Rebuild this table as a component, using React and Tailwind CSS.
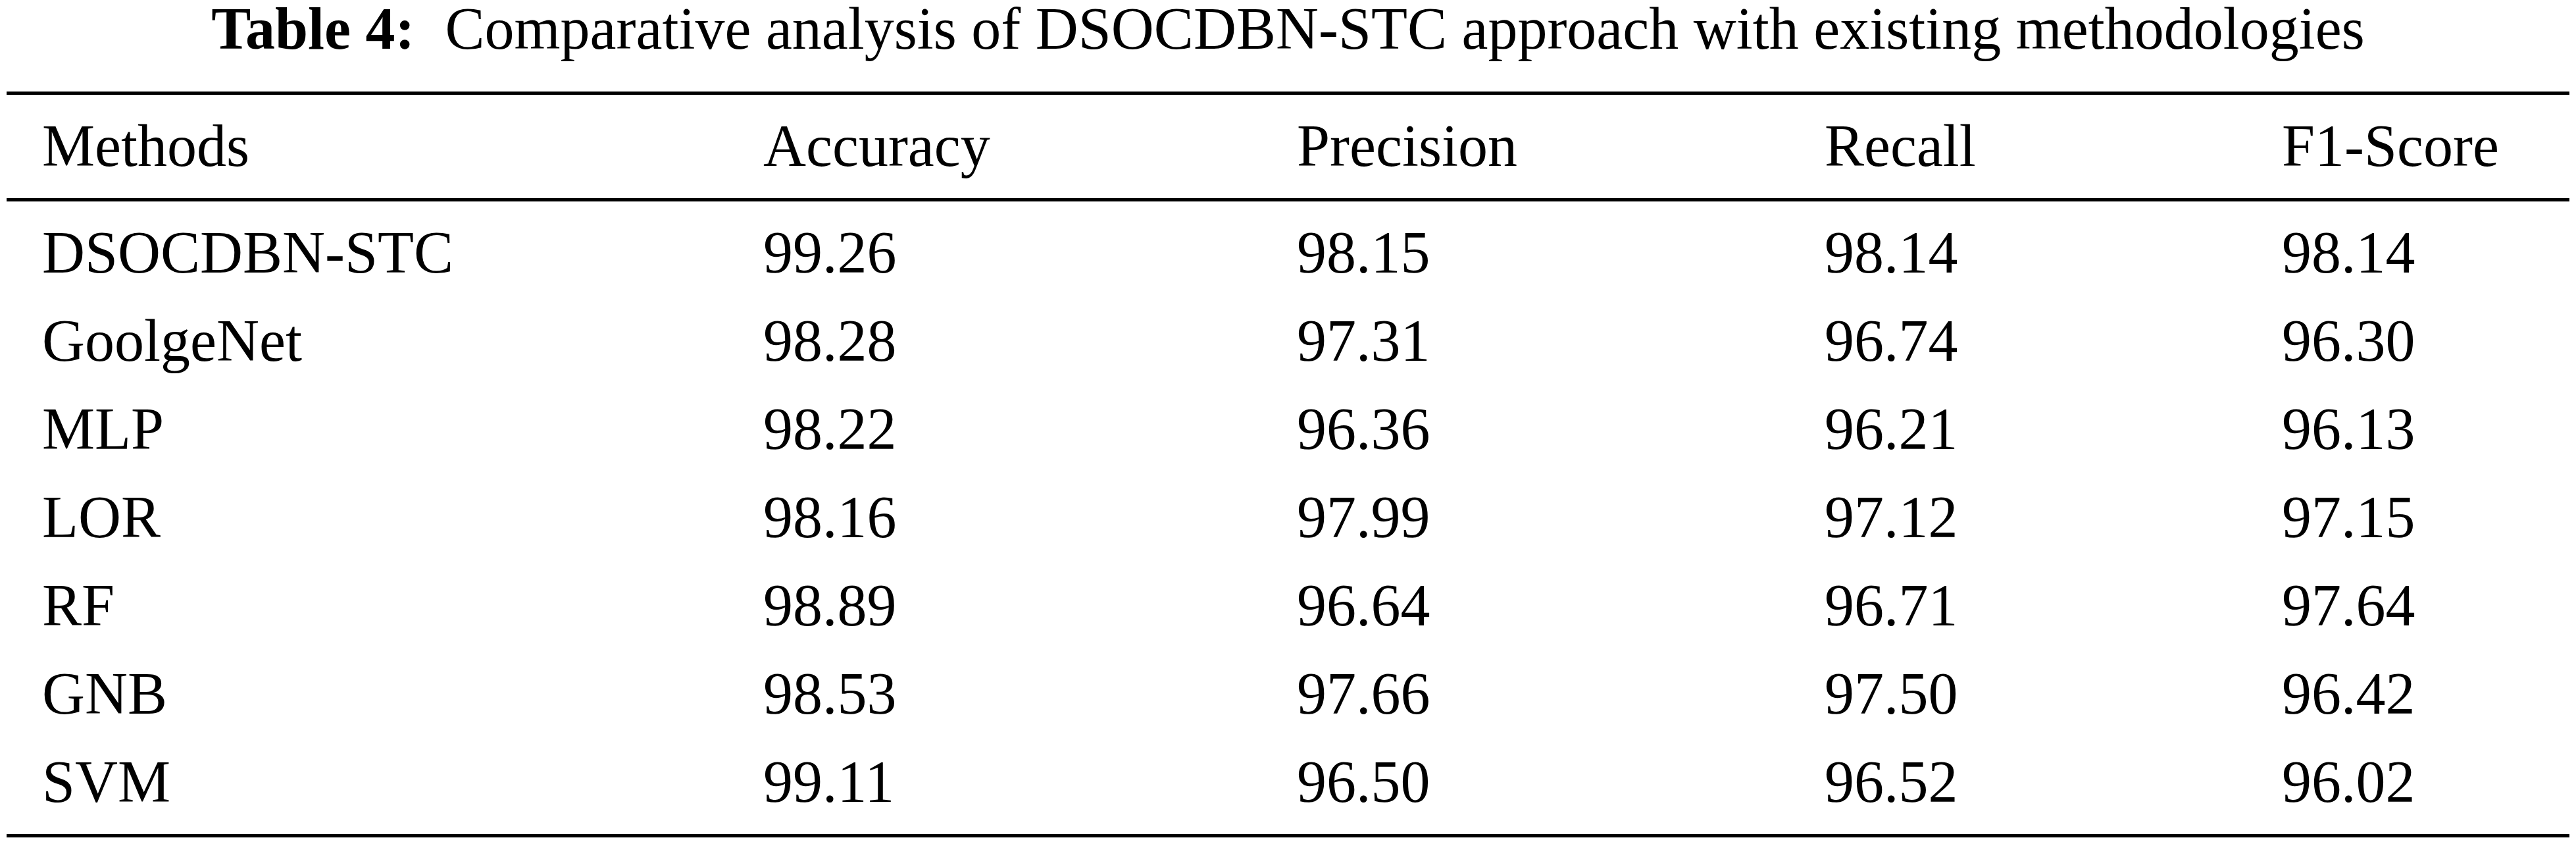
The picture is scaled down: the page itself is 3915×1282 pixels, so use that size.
// Table 4 – comparative analysis, rendered as a booktabs-style table
const headers = ['Methods', 'Accuracy', 'Precision', 'Recall', 'F1-Score'];

const rows = [
  ['DSOCDBN-STC', '99.26', '98.15', '98.14', '98.14'],
  ['GoolgeNet', '98.28', '97.31', '96.74', '96.30'],
  ['MLP', '98.22', '96.36', '96.21', '96.13'],
  ['LOR', '98.16', '97.99', '97.12', '97.15'],
  ['RF', '98.89', '96.64', '96.71', '97.64'],
  ['GNB', '98.53', '97.66', '97.50', '96.42'],
  ['SVM', '99.11', '96.50', '96.52', '96.02'],
];

const cols = 'grid grid-cols-[1096px_811px_802px_695px_1fr] pl-[54px]';

export default function App() {
  return (
    <div className="w-[3915px] h-[1282px] bg-white text-black font-['Liberation_Serif','Times_New_Roman',serif] text-[90px]">
      <div className="mx-[10px]">
        <h1 className="text-center leading-[87px] font-normal whitespace-nowrap">
          <span className="font-bold mr-[46px]">Table 4:</span>
          Comparative analysis of DSOCDBN-STC approach with existing methodologies
        </h1>

        <div className="mt-[52px] h-[5px] bg-black" />

        {/* header */}
        <div className={`${cols} pt-[11px] pb-[12px] leading-[134px]`}>
          {headers.map((h) => (
            <div key={h} className="whitespace-nowrap">{h}</div>
          ))}
        </div>

        <div className="h-[5px] bg-black" />

        {/* body */}
        <div className="pt-[11px] pb-[12px]">
          {rows.map((r) => (
            <div key={r[0]} className={`${cols} leading-[134px]`}>
              {r.map((c, i) => (
                <div key={i} className="whitespace-nowrap">{c}</div>
              ))}
            </div>
          ))}
        </div>

        <div className="h-[5px] bg-black" />
      </div>
    </div>
  );
}
